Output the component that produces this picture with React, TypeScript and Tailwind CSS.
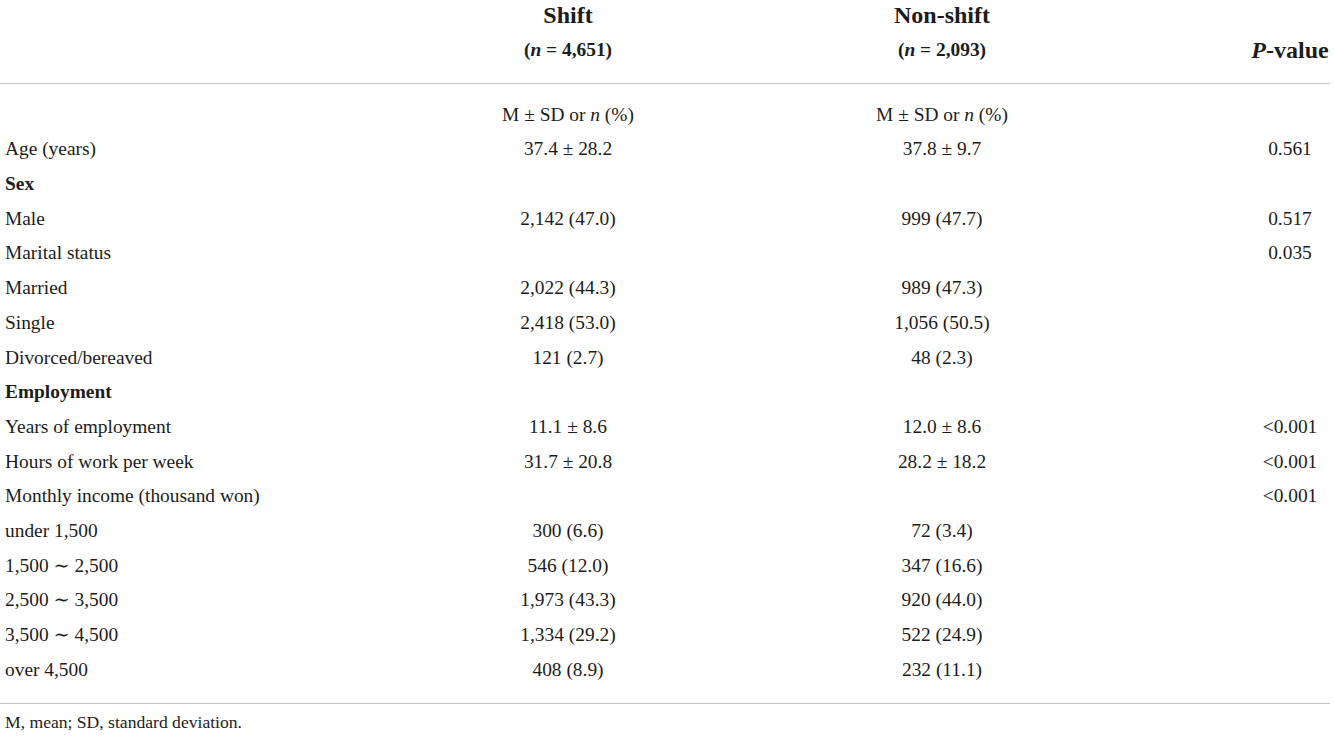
const rows: { label: string; bold?: boolean; a?: string; b?: string; p?: string }[] = [
  { label: "Age (years)", a: "37.4 ± 28.2", b: "37.8 ± 9.7", p: "0.561" },
  { label: "Sex", bold: true },
  { label: "Male", a: "2,142 (47.0)", b: "999 (47.7)", p: "0.517" },
  { label: "Marital status", p: "0.035" },
  { label: "Married", a: "2,022 (44.3)", b: "989 (47.3)" },
  { label: "Single", a: "2,418 (53.0)", b: "1,056 (50.5)" },
  { label: "Divorced/bereaved", a: "121 (2.7)", b: "48 (2.3)" },
  { label: "Employment", bold: true },
  { label: "Years of employment", a: "11.1 ± 8.6", b: "12.0 ± 8.6", p: "<0.001" },
  { label: "Hours of work per week", a: "31.7 ± 20.8", b: "28.2 ± 18.2", p: "<0.001" },
  { label: "Monthly income (thousand won)", p: "<0.001" },
  { label: "under 1,500", a: "300 (6.6)", b: "72 (3.4)" },
  { label: "1,500 ∼ 2,500", a: "546 (12.0)", b: "347 (16.6)" },
  { label: "2,500 ∼ 3,500", a: "1,973 (43.3)", b: "920 (44.0)" },
  { label: "3,500 ∼ 4,500", a: "1,334 (29.2)", b: "522 (24.9)" },
  { label: "over 4,500", a: "408 (8.9)", b: "232 (11.1)" },
];

const grid = "grid grid-cols-[468px_200px_548px_118px]";

function GroupHead({ name, n }: { name: string; n: string }) {
  return (
    <div className="flex flex-col items-center font-bold">
      <div className="text-[24px] leading-[30px]">{name}</div>
      <div className="text-[19.4px] leading-[40px]">
        (<i>n</i> = {n})
      </div>
    </div>
  );
}

function Stat() {
  return (
    <span>
      M ± SD or <i>n</i> (%)
    </span>
  );
}

export default function App() {
  return (
    <div
      className="h-[738px] w-[1334px] overflow-hidden bg-white text-[#1c1c1c]"
      style={{ fontFamily: '"Liberation Serif", "DejaVu Serif", serif' }}
    >
      <div className={`${grid} items-end pb-[13px]`}>
        <div />
        <GroupHead name="Shift" n="4,651" />
        <GroupHead name="Non-shift" n="2,093" />
        <div className="pl-[30px] text-center text-[24px] font-bold leading-[40px]">
          <i>P</i>-value
        </div>
      </div>
      <div className="h-px w-[1330px] bg-[#c4c4c4]" />

      <div className="pt-[13.6px] pb-[15.5px] text-[19.4px] leading-[34.7px]">
        <div className={grid}>
          <div />
          <div className="text-center">
            <Stat />
          </div>
          <div className="text-center">
            <Stat />
          </div>
          <div />
        </div>
        {rows.map((r) => (
          <div key={r.label} className={grid}>
            <div className={`pl-[5px] ${r.bold ? "font-bold" : ""}`}>{r.label}</div>
            <div className="text-center">{r.a}</div>
            <div className="text-center">{r.b}</div>
            <div className="pl-[30px] text-center">{r.p}</div>
          </div>
        ))}
      </div>
      <div className="h-px w-[1330px] bg-[#c4c4c4]" />

      <div className="pl-[5px] pt-[4px] text-[17.6px] leading-[28px]">M, mean; SD, standard deviation.</div>
    </div>
  );
}
